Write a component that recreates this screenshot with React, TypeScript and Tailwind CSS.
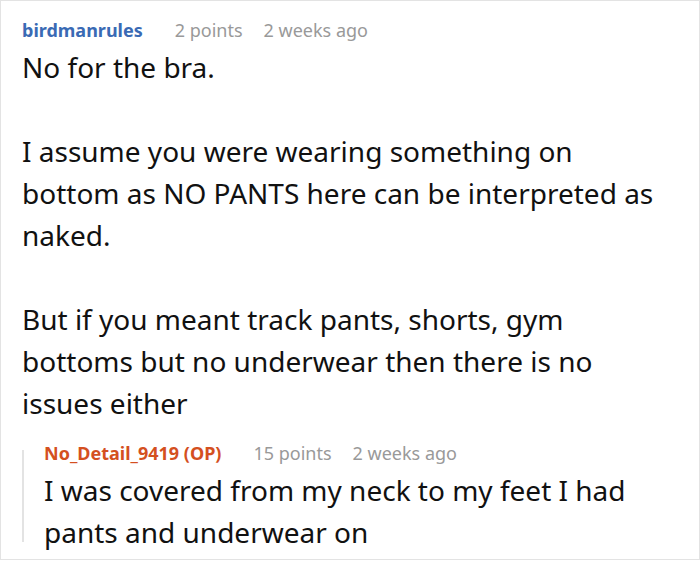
export default function App() {
  return (
    <div className="h-[562px] w-[700px] bg-white" style={{ fontFamily: '"Noto Sans", sans-serif' }}>
      <div className="h-[560px] w-[700px] border border-[#e3e3e3] pl-[21px] pt-[15px]">
        <div className="flex items-baseline text-[18px] leading-[28px]">
          <span className="font-bold text-[#3a6ab4]">birdmanrules</span>
          <span className="ml-[32px] text-[#999]">2 points</span>
          <span className="ml-[21px] text-[#999]">2 weeks ago</span>
        </div>
        <div className="mt-[2px] w-[640px] text-[28px] leading-[42px] text-[#111]">
          <p>No for the bra.</p>
          <p className="mt-[42px]">
            I assume you were wearing something on bottom as NO PANTS here can be interpreted as naked.
          </p>
          <p className="mt-[42px]">
            But if you meant track pants, shorts, gym bottoms but no underwear then there is no issues either
          </p>
        </div>
        <div className="mt-[15px] flex">
          <div className="my-[11px] w-[2px] shrink-0 bg-[#e3e3e3]" />
          <div className="pl-[20px]">
            <div className="flex items-baseline text-[18px] leading-[28px]">
              <span className="font-bold text-[#d4501f]">No_Detail_9419 (OP)</span>
              <span className="ml-[32px] text-[#999]">15 points</span>
              <span className="ml-[21px] text-[#999]">2 weeks ago</span>
            </div>
            <p className="mt-[2px] w-[620px] text-[28px] leading-[42px] text-[#111]">
              I was covered from my neck to my feet I had pants and underwear on
            </p>
          </div>
        </div>
      </div>
    </div>
  );
}
